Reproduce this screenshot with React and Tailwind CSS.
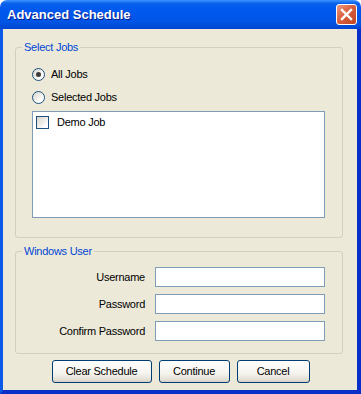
import React from "react";

function Radio({ checked, label }) {
  return (
    <div className="flex items-center h-[13px]">
      <div className="w-[13px] h-[13px] rounded-full border border-[#1c5180] bg-[linear-gradient(135deg,#d6d3c8,#ffffff_75%)] flex items-center justify-center">
        {checked && <div className="w-[5px] h-[5px] rounded-full bg-[#3c3c3c]" />}
      </div>
      <span className="ml-[6px] leading-[13px]">{label}</span>
    </div>
  );
}

function Field({ label }) {
  return (
    <div className="flex items-center h-[20px]">
      <span className="flex-1 text-right pr-[10px]">{label}</span>
      <input className="w-[170px] h-[20px] border border-[#7f9db9] bg-white outline-none" />
    </div>
  );
}

function Btn({ w, children }) {
  return (
    <button
      className={`${w} h-[23px] rounded-[3px] border border-[#003c74] bg-[linear-gradient(to_bottom,#ffffff,#f4f3ee_60%,#e2dfd4_90%,#d6d0c5)] text-black text-[11px] flex items-center justify-center`}
    >
      {children}
    </button>
  );
}

export default function App() {
  return (
    <div className="w-[361px] h-[394px] flex flex-col font-['Liberation_Sans',Arial,sans-serif] text-[11px] tracking-[-0.25px] text-black bg-white">
      <div className="h-[29px] rounded-t-[7px] flex items-center pl-[7px] pr-[4px] bg-[linear-gradient(to_bottom,#3d95ff,#0a61ec_12%,#0058ee_35%,#0055e5_75%,#0045d0)]">
        <span className="text-white font-bold text-[13px] tracking-[0px] [text-shadow:1px_1px_0_#0a1a8a]">
          Advanced Schedule
        </span>
        <div className="ml-auto w-[21px] h-[21px] rounded-[3px] border border-white bg-[linear-gradient(135deg,#ec9a82,#d9613f_45%,#c04422)] flex items-center justify-center">
          <svg width="19" height="19" viewBox="0 0 19 19">
            <path d="M5 5 L14 14 M14 5 L5 14" stroke="white" strokeWidth="2.4" strokeLinecap="square" />
          </svg>
        </div>
      </div>
      <div className="flex-1 flex flex-col border-l-[3px] border-l-[#0b5ae7] border-r-[4px] border-r-[#0a2fc9] border-b-[4px] border-b-[#0a2fc9]">
        <div className="flex-1 flex flex-col bg-[#ece9d8] pl-[12px] pr-[14px] pt-[12px]">
          <fieldset className="border border-[#d0d0bf] rounded-[3px] p-0 m-0">
            <legend className="ml-[6px] px-[2px] text-[#0046d5] leading-[13px]">Select Jobs</legend>
            <div className="pl-[16px] pr-[17px] pt-[14px] pb-[19px] flex flex-col">
              <Radio checked label="All Jobs" />
              <div className="mt-[10px]">
                <Radio label="Selected Jobs" />
              </div>
              <div className="mt-[7px] h-[107px] border border-[#7f9db9] bg-white pl-[3px] pt-[4px]">
                <div className="flex items-center h-[13px]">
                  <div className="w-[13px] h-[13px] border border-[#1c5180] bg-[linear-gradient(135deg,#d6d3c8,#ffffff_80%)]" />
                  <span className="ml-[8px] leading-[13px]">Demo Job</span>
                </div>
              </div>
            </div>
          </fieldset>
          <fieldset className="mt-[7px] border border-[#d0d0bf] rounded-[3px] p-0 m-0">
            <legend className="ml-[6px] px-[2px] text-[#0046d5] leading-[13px]">Windows User</legend>
            <div className="pl-[16px] pr-[17px] pt-[9px] pb-[12px] flex flex-col gap-[7px]">
              <Field label="Username" />
              <Field label="Password" />
              <Field label="Confirm Password" />
            </div>
          </fieldset>
          <div className="mt-[6px] pl-[3px] flex justify-center gap-[7px] tracking-[-0.25px]">
            <Btn w="w-[100px]">Clear Schedule</Btn>
            <Btn w="w-[71px]">Continue</Btn>
            <Btn w="w-[73px]">Cancel</Btn>
          </div>
        </div>
      </div>
    </div>
  );
}
